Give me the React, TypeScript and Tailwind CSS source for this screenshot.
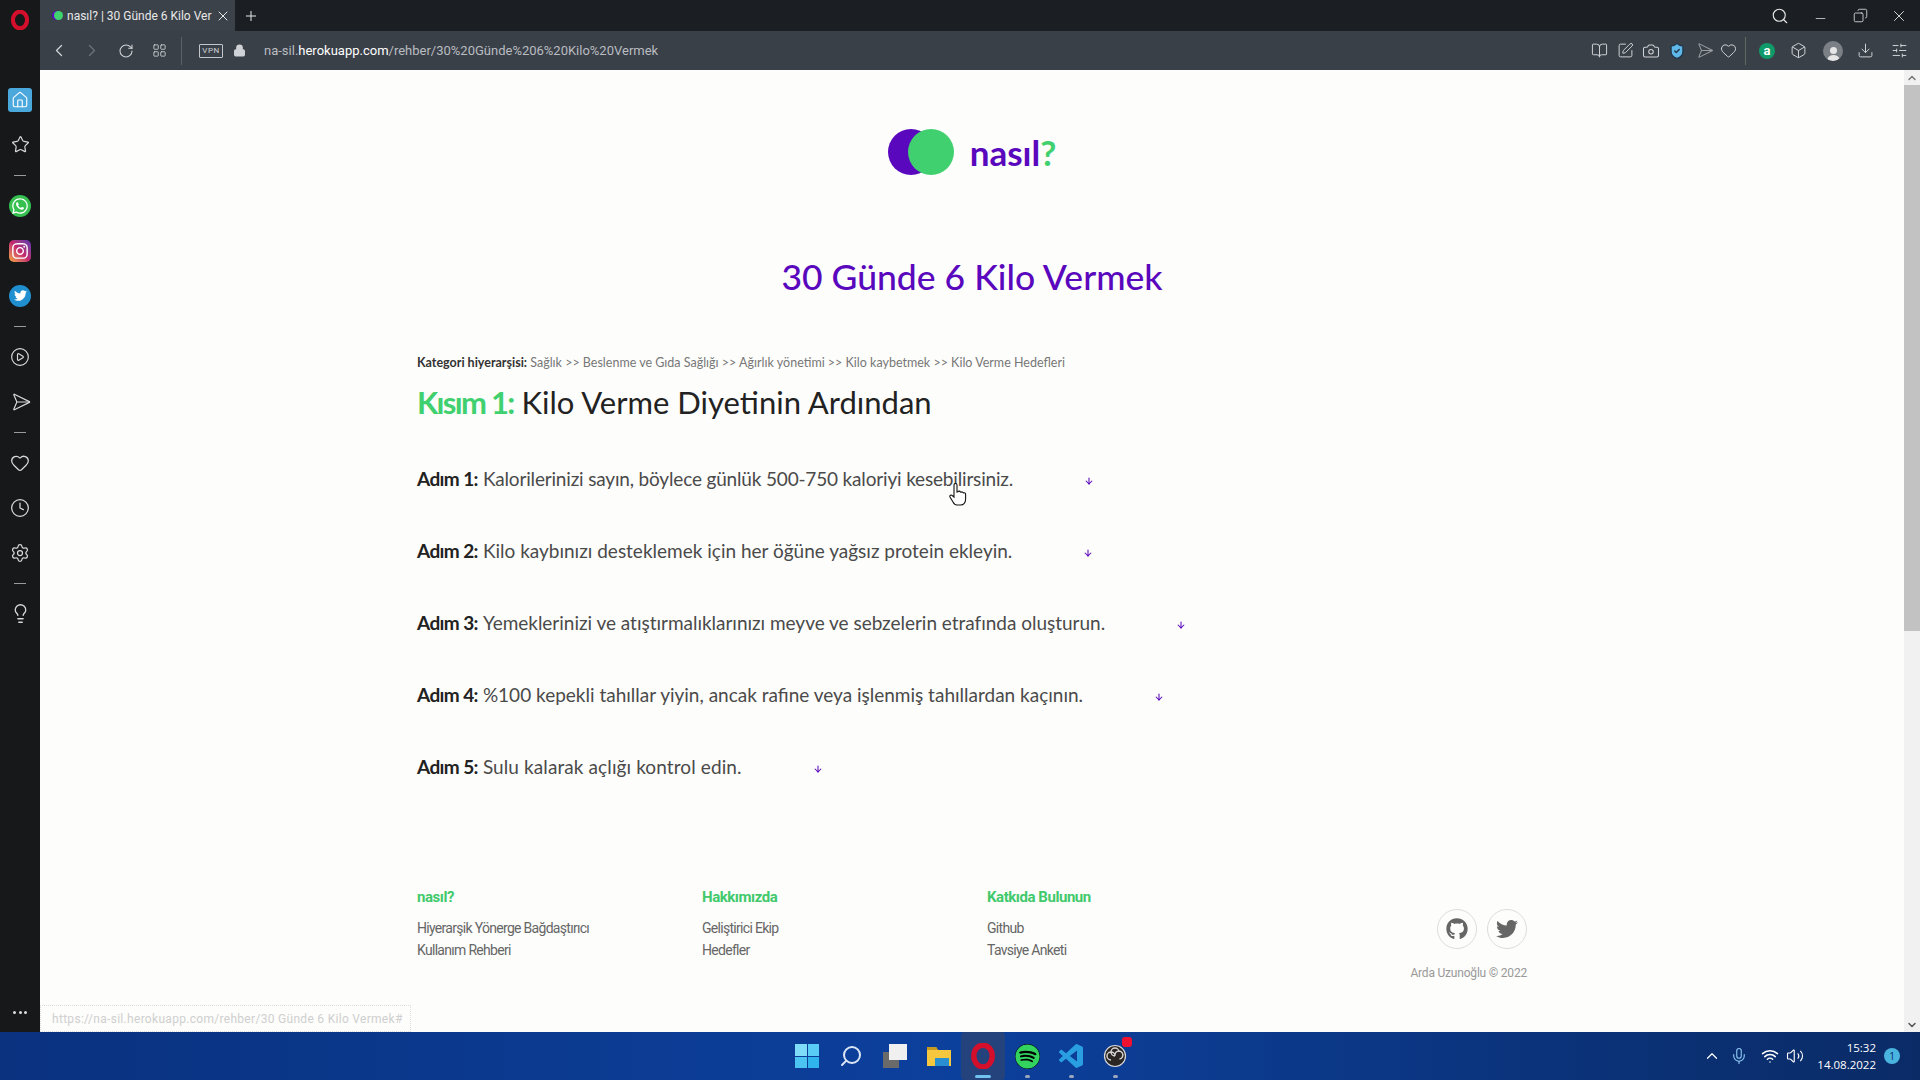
import { ReactNode } from "react";
import {
  ArrowDown,
  BookOpen,
  Box,
  Camera,
  ChevronDown,
  ChevronLeft,
  ChevronRight,
  ChevronUp,
  CirclePlay,
  Clock,
  Copy,
  Download,
  Heart,
  House,
  Lightbulb,
  LayoutGrid,
  Lock,
  Mic,
  Minus,
  Plus,
  RotateCw,
  Search,
  Send,
  Settings,
  ShieldCheck,
  SlidersHorizontal,
  SquarePen,
  Star,
  Volume2,
  Wifi,
  X,
} from "lucide-react";
import { FaGithub, FaInstagram, FaSpotify, FaTwitter, FaWhatsapp } from "react-icons/fa";

const OperaLogo = ({ size = 20 }: { size?: number }) => (
  <svg width={size} height={size} viewBox="0 0 24 24">
    <ellipse cx="12" cy="12" rx="8.5" ry="10" fill="none" stroke="#d40f2b" strokeWidth="5" />
  </svg>
);

const SideIcon = ({ children }: { children: ReactNode }) => (
  <div className="flex h-[45px] w-10 items-center justify-center text-[#d8d8d8]">{children}</div>
);

const SideDash = () => (
  <div className="flex h-4 w-10 items-center justify-center">
    <div className="h-px w-3 bg-[#9a9a9a]" />
  </div>
);

const Sidebar = () => (
  <aside className="flex w-10 shrink-0 flex-col bg-[#17181a]">
    <div className="flex h-[40px] items-center justify-center">
      <OperaLogo />
    </div>
    <div className="h-[37px]" />
    <SideIcon>
      <div className="flex h-6 w-6 items-center justify-center rounded-[3px] bg-[#4aa8dc]">
        <House size={18} strokeWidth={1.5} className="text-white" />
      </div>
    </SideIcon>
    <SideIcon>
      <Star size={19} strokeWidth={1.5} />
    </SideIcon>
    <SideDash />
    <SideIcon>
      <div className="flex h-[22px] w-[22px] items-center justify-center rounded-full bg-[#35c04f]">
        <FaWhatsapp size={18} className="text-white" />
      </div>
    </SideIcon>
    <SideIcon>
      <div className="flex h-[22px] w-[22px] items-center justify-center rounded-[5px] bg-gradient-to-tr from-[#f4a72c] via-[#c3266e] to-[#5a2fb0]">
        <FaInstagram size={18} className="text-white" />
      </div>
    </SideIcon>
    <SideIcon>
      <div className="flex h-[22px] w-[22px] items-center justify-center rounded-full bg-[#1f8fd0]">
        <FaTwitter size={13} className="text-white" />
      </div>
    </SideIcon>
    <SideDash />
    <SideIcon>
      <CirclePlay size={20} strokeWidth={1.4} />
    </SideIcon>
    <SideIcon>
      <Send size={20} strokeWidth={1.4} className="-ml-[5px] rotate-45" />
    </SideIcon>
    <SideDash />
    <SideIcon>
      <Heart size={20} strokeWidth={1.5} />
    </SideIcon>
    <SideIcon>
      <Clock size={20} strokeWidth={1.5} />
    </SideIcon>
    <SideIcon>
      <Settings size={20} strokeWidth={1.5} />
    </SideIcon>
    <SideDash />
    <SideIcon>
      <Lightbulb size={21} strokeWidth={1.5} />
    </SideIcon>
    <div className="mt-auto mb-[18px] flex items-center justify-center gap-[2.5px]">
      <span className="h-[3px] w-[3px] rounded-full bg-[#ddd]" />
      <span className="h-[3px] w-[3px] rounded-full bg-[#ddd]" />
      <span className="h-[3px] w-[3px] rounded-full bg-[#ddd]" />
    </div>
  </aside>
);

const TabStrip = () => (
  <div className="flex h-[31px] items-stretch bg-[#1b1e22] text-[#e8e8e8]">
    <div className="flex w-[195px] items-center bg-[#3c424a] pl-[12px] pr-[4px]">
      <span className="relative h-[9px] w-[9px] shrink-0">
        <span className="absolute inset-0 rounded-full bg-[#5a10c0]" />
        <span className="absolute left-[2px] top-0 h-[9px] w-[9px] rounded-full bg-[#3fd26f]" />
      </span>
      <span className="ml-[6px] w-[146px] overflow-hidden whitespace-nowrap font-[family-name:Roboto] text-[12px]">
        nasıl? | 30 Günde 6 Kilo Ver
      </span>
      <X size={16} strokeWidth={1.5} className="ml-auto" />
    </div>
    <div className="flex w-8 items-center justify-center">
      <Plus size={16} strokeWidth={1.5} />
    </div>
    <div className="ml-auto flex items-center pr-[12px]">
      <Search size={18} strokeWidth={1.5} />
      <Minus size={15} strokeWidth={1.2} className="ml-[24px] mt-[6px]" />
      <Copy size={15} strokeWidth={1.3} className="ml-[25px] -scale-x-100" />
      <X size={18} strokeWidth={1.2} className="ml-[22px]" />
    </div>
  </div>
);

const ToolIcon = ({ children, className }: { children: ReactNode; className: string }) => (
  <div className={`flex items-center justify-center ${className}`}>{children}</div>
);

const Toolbar = () => (
  <div className="flex h-[39px] items-center bg-[#3a4048] text-[#cfd2d6]">
    <ToolIcon className="ml-[9px] w-5">
      <ChevronLeft size={21} strokeWidth={1.6} />
    </ToolIcon>
    <ToolIcon className="ml-[13px] w-5 text-[#6d7278]">
      <ChevronRight size={21} strokeWidth={1.6} />
    </ToolIcon>
    <ToolIcon className="ml-[14px] w-5">
      <RotateCw size={16} strokeWidth={1.6} />
    </ToolIcon>
    <ToolIcon className="ml-[15px] w-4">
      <LayoutGrid size={15} strokeWidth={1.4} />
    </ToolIcon>
    <div className="ml-[14px] h-7 w-px bg-[#5c6168]" />
    <div className="ml-[17px] flex h-[14px] w-6 items-center justify-center rounded-[1px] border border-[#c3c6ca] font-[family-name:Roboto] text-[8px] leading-none tracking-[0.5px]">
      VPN
    </div>
    <ToolIcon className="ml-[9px] w-[14px]">
      <Lock size={13} strokeWidth={2.2} fill="#cfd2d6" />
    </ToolIcon>
    <div className="ml-[18px] whitespace-nowrap font-[family-name:Roboto] text-[13px] text-[#b9bcc0]">
      na-sil.<span className="text-white">herokuapp.com</span>/rehber/30%20Günde%206%20Kilo%20Vermek
    </div>
    <div className="ml-auto flex items-center pr-[12px]">
      <BookOpen size={17} strokeWidth={1.4} />
      <SquarePen size={17} strokeWidth={1.4} className="ml-[9px]" />
      <Camera size={18} strokeWidth={1.4} className="ml-[8px]" />
      <ShieldCheck size={18} strokeWidth={2} fill="#5fb8ea" className="ml-[8px] text-[#24384a]" />
      <Send size={17} strokeWidth={1.4} className="ml-[8px] rotate-45 text-[#9a9da2]" />
      <Heart size={17} strokeWidth={1.4} className="ml-[9px]" />
      <div className="ml-[8px] h-7 w-px bg-[#5c6b5c]" />
      <div className="ml-[13px] flex h-4 w-4 items-center justify-center rounded-full bg-[#0f9a6a] font-[family-name:Roboto] text-[13px] font-bold leading-none text-white">
        a
      </div>
      <Box size={17} strokeWidth={1.4} className="ml-[15px]" />
      <div className="ml-[16px] flex h-5 w-5 flex-col items-center justify-end overflow-hidden rounded-full bg-[#7b8087]">
        <span className="h-[7px] w-[7px] rounded-full bg-[#e6e6e6]" />
        <span className="mt-[1px] h-[6px] w-[13px] rounded-t-full bg-[#e6e6e6]" />
      </div>
      <Download size={17} strokeWidth={1.4} className="ml-[14px]" />
      <SlidersHorizontal size={17} strokeWidth={1.4} className="ml-[17px]" />
    </div>
  </div>
);

const Scrollbar = () => (
  <div className="flex w-4 shrink-0 flex-col bg-[#f1f1f1]">
    <div className="flex h-[15px] items-center justify-center text-[#777]">
      <ChevronUp size={12} strokeWidth={3} />
    </div>
    <div className="h-[546px] bg-[#c2c2c2]" />
    <div className="mt-auto flex h-[15px] items-center justify-center text-[#555]">
      <ChevronDown size={12} strokeWidth={3} />
    </div>
  </div>
);

const steps = [
  {
    label: "Adım 1:",
    text: "Kalorilerinizi sayın, böylece günlük 500-750 kaloriyi kesebilirsiniz.",
    fit: "tracking-[-0.17px]",
  },
  { label: "Adım 2:", text: "Kilo kaybınızı desteklemek için her öğüne yağsız protein ekleyin.", fit: "tracking-normal" },
  {
    label: "Adım 3:",
    text: "Yemeklerinizi ve atıştırmalıklarınızı meyve ve sebzelerin etrafında oluşturun.",
    fit: "tracking-[-0.02px]",
  },
  {
    label: "Adım 4:",
    text: "%100 kepekli tahıllar yiyin, ancak rafine veya işlenmiş tahıllardan kaçının.",
    fit: "tracking-normal",
  },
  { label: "Adım 5:", text: "Sulu kalarak açlığı kontrol edin.", fit: "tracking-[0.1px]" },
];

const footerColumns = [
  { title: "nasıl?", links: ["Hiyerarşik Yönerge Bağdaştırıcı", "Kullanım Rehberi"] },
  { title: "Hakkımızda", links: ["Geliştirici Ekip", "Hedefler"] },
  { title: "Katkıda Bulunun", links: ["Github", "Tavsiye Anketi"] },
];

const Page = () => (
  <div className="relative min-w-0 flex-1 overflow-hidden bg-[#fdfdfb]">
    <div className="mx-auto w-[1110px]">
      <div className="flex items-center justify-center pt-[59px]">
        <div className="relative h-[46px] w-[66px]">
          <span className="absolute left-0 top-0 h-[46px] w-[46px] rounded-full bg-[#5a08bd]" />
          <span className="absolute left-[20px] top-0 h-[46px] w-[46px] rounded-full bg-[#41d06f]" />
        </div>
        <div className="ml-4 font-[family-name:Lato] text-[35px] font-bold leading-none text-[#5a08bd]">
          nasıl<span className="text-[#41d06f]">?</span>
        </div>
      </div>

      <h1 className="mt-[80px] text-center font-[family-name:Lato] text-[35.5px] font-medium leading-[44px] text-[#5a08bd]">
        30 Günde 6 Kilo Vermek
      </h1>

      <p className="mt-[55px] font-[family-name:Lato] text-[12.5px] leading-[18px] text-[#777]">
        <b className="font-bold text-[#333]">Kategori hiyerarşisi:</b> Sağlık &gt;&gt; Beslenme ve Gıda Sağlığı &gt;&gt;
        Ağırlık yönetimi &gt;&gt; Kilo kaybetmek &gt;&gt; Kilo Verme Hedefleri
      </p>
      <h2 className="mt-[8px] font-[family-name:Lato] text-[31px] leading-[44px] text-[#222]">
        <b className="font-bold tracking-[-1.7px] text-[#41d06f]">Kısım 1:</b> Kilo Verme Diyetinin Ardından
      </h2>

      <div className="mt-[41px] flex flex-col gap-[44px]">
        {steps.map((step) => (
          <div key={step.label} className="flex h-7 items-center font-[family-name:Lato] text-[19px] text-[#4a4a4a]">
            <span className="font-bold tracking-[-0.6px] text-[#222]">{step.label}</span>
            <span className={`ml-[5px] ${step.fit}`}>{step.text}</span>
            <ArrowDown size={10} strokeWidth={2.5} className="ml-[71px] mt-[3px] text-[#5a08bd]" />
          </div>
        ))}
      </div>

      <footer className="mt-[106px] flex font-[family-name:Roboto]">
        {footerColumns.map((col) => (
          <div key={col.title} className="w-[285px]">
            <h3 className="text-[15px] font-bold leading-5 tracking-[-0.45px] text-[#41c96c]">{col.title}</h3>
            <ul className="mt-[10px] text-[14px] leading-[22px] tracking-[-0.7px] text-[#666]">
              {col.links.map((link) => (
                <li key={link}>{link}</li>
              ))}
            </ul>
          </div>
        ))}
        <div className="ml-auto flex flex-col items-end">
          <div className="mt-[22px] flex gap-[10px]">
            <a className="flex h-10 w-10 items-center justify-center rounded-full border border-[#dddddd] text-[#666]">
              <FaGithub size={22} />
            </a>
            <a className="flex h-10 w-10 items-center justify-center rounded-full border border-[#dddddd] text-[#666]">
              <FaTwitter size={22} />
            </a>
          </div>
          <p className="mt-[15px] text-[12px] tracking-[-0.2px] text-[#999]">Arda Uzunoğlu © 2022</p>
        </div>
      </footer>
    </div>

    <div className="absolute bottom-0 left-0 flex h-[27px] w-[371px] items-center border border-dotted border-[#ddd] bg-[#fdfdfb] pl-[11px] font-[family-name:Roboto] text-[12px] tracking-[0.3px] text-[#cfcfcf]">
      https://na-sil.herokuapp.com/rehber/30 Günde 6 Kilo Vermek#
    </div>

    <svg width="20" height="24" viewBox="0 0 20 24" className="absolute left-[908px] top-[413px]">
      <path
        d="M6 2a1.5 1.5 0 0 1 3 0v7l1-.3a1.4 1.4 0 0 1 2.4.3l.6.2a1.4 1.4 0 0 1 2.2.6l.4.1c1-.3 2 .3 2 1.4V16c0 3.5-2 6-5 6H9c-2 0-3-1-4-3l-3-5c-.7-1.5 1-2.7 2.2-1.5L6 14z"
        fill="#fff"
        stroke="#111"
        strokeWidth="1.1"
      />
    </svg>
  </div>
);

const FolderIcon = () => (
  <svg width="24" height="22" viewBox="0 0 24 22">
    <path d="M0 2h9l2 3h13v16H0z" fill="#f5c73f" />
    <path d="M0 2h9l2 3H0z" fill="#c99a20" />
    <rect x="8" y="13" width="14" height="8" fill="#2a8fd0" />
  </svg>
);

const VSCodeIcon = () => (
  <svg width="24" height="24" viewBox="0 0 24 24" fill="#2a9fe0">
    <path d="M23.15 2.587L18.21.21a1.494 1.494 0 0 0-1.705.29l-9.46 8.63-4.12-3.128a.999.999 0 0 0-1.276.057L.327 7.261A1 1 0 0 0 .326 8.74L3.899 12 .326 15.26a1 1 0 0 0 .001 1.479L1.65 17.94a.999.999 0 0 0 1.276.057l4.12-3.128 9.46 8.63a1.492 1.492 0 0 0 1.704.29l4.942-2.377A1.5 1.5 0 0 0 24 20.06V3.939a1.5 1.5 0 0 0-.85-1.352zm-5.146 14.861L10.826 12l7.178-5.448v10.896z" />
  </svg>
);

const ObsIcon = () => (
  <svg width="24" height="24" viewBox="0 0 24 24">
    <circle cx="12" cy="12" r="10.5" fill="#2b2623" stroke="#d8d8d8" strokeWidth="1.2" />
    <path d="M12 12a4 4 0 1 1 4-4M12 12a4 4 0 1 0-4 4M12 12a4 4 0 1 1 4.5 3" fill="none" stroke="#d8d8d8" strokeWidth="1.4" />
  </svg>
);

const TaskItem = ({ children, dot, active }: { children: ReactNode; dot?: boolean; active?: boolean }) => (
  <div className={`relative flex h-12 w-11 items-center justify-center rounded-[4px] ${active ? "bg-[#24427c]" : ""}`}>
    {children}
    {dot && (
      <span
        className={`absolute bottom-[2px] h-[3px] rounded-full ${active ? "w-4 bg-[#6fc3ee]" : "w-[5px] bg-[#9aa7bd]"}`}
      />
    )}
  </div>
);

const Taskbar = () => (
  <div className="flex h-12 shrink-0 items-center bg-gradient-to-r from-[#0a327f] via-[#0c409d] to-[#0a2b66] pl-[785px] text-white">
    <TaskItem>
      <div className="grid h-6 w-6 grid-cols-2 gap-[1px]">
        <span className="bg-[#7fdcf8]" />
        <span className="bg-[#59cdf5]" />
        <span className="bg-[#4cc4f2]" />
        <span className="bg-[#2fb4ee]" />
      </div>
    </TaskItem>
    <TaskItem>
      <Search size={24} strokeWidth={2} className="-scale-x-100 text-[#dbe6f5]" />
    </TaskItem>
    <TaskItem>
      <div className="relative h-6 w-6">
        <span className="absolute bottom-0 left-0 h-4 w-4 bg-[#6a6a6a]" />
        <span className="absolute right-0 top-0 h-4 w-[18px] bg-[#f0f0f0]" />
      </div>
    </TaskItem>
    <TaskItem>
      <FolderIcon />
    </TaskItem>
    <TaskItem dot active>
      <OperaLogo size={26} />
    </TaskItem>
    <TaskItem dot>
      <FaSpotify size={25} className="rounded-full bg-black text-[#33d35f]" />
    </TaskItem>
    <TaskItem dot>
      <VSCodeIcon />
    </TaskItem>
    <TaskItem dot>
      <ObsIcon />
      <span className="absolute right-[5px] top-[5px] h-[10px] w-[10px] rounded-[3px] bg-[#f01030]" />
    </TaskItem>
    <div className="ml-auto flex items-center pr-[20px]">
      <ChevronUp size={18} strokeWidth={1.6} />
      <Mic size={18} strokeWidth={1.5} className="ml-[9px] text-[#8cc8f0]" />
      <Wifi size={18} strokeWidth={2} className="ml-[13px]" />
      <Volume2 size={18} strokeWidth={1.5} className="ml-[7px]" />
      <div className="ml-[13px] text-right font-[family-name:'Open_Sans'] text-[11.5px] leading-[17px]">
        <div>15:32</div>
        <div>14.08.2022</div>
      </div>
      <div className="ml-[8px] flex h-4 w-4 items-center justify-center rounded-full bg-[#4ab4e0] font-[family-name:'Open_Sans'] text-[10px] text-[#0a2b66]">
        1
      </div>
    </div>
  </div>
);

const App = () => {
  return (
    <div className="flex h-screen w-screen flex-col overflow-hidden">
      <div className="flex min-h-0 flex-1">
        <Sidebar />
        <div className="flex min-w-0 flex-1 flex-col">
          <TabStrip />
          <Toolbar />
          <div className="flex min-h-0 flex-1">
            <Page />
            <Scrollbar />
          </div>
        </div>
      </div>
      <Taskbar />
    </div>
  );
};

export default App;
